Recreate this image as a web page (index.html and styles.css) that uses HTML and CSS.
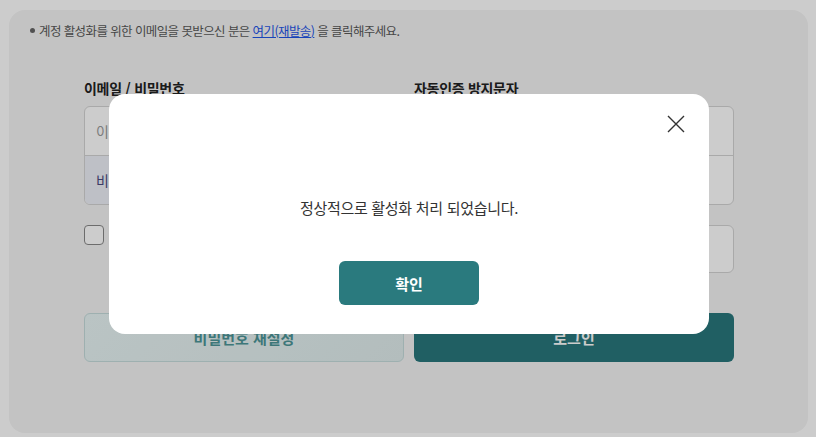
FILE: index.html
```html
<!DOCTYPE html>
<html lang="ko">
<head>
<meta charset="utf-8">
<title>로그인</title>
<link rel="stylesheet" href="styles.css">
</head>
<body>
<div class="card">
  <ul class="notice">
    <li>계정 활성화를 위한 이메일을 못받으신 분은 <a href="#" class="link">여기(재발송)</a> 을 클릭해주세요.</li>
  </ul>
  <div class="form">
    <div class="col">
      <div class="label">이메일 / 비밀번호</div>
      <div class="group">
        <div class="field">이메일</div>
        <div class="field field-pw">비밀번호</div>
      </div>
    </div>
    <div class="col">
      <div class="label">자동인증 방지문자</div>
      <div class="group">
        <div class="field"></div>
        <div class="field"></div>
      </div>
    </div>
    <div class="row2">
      <span class="checkbox"></span>
      <span class="check-label">이메일 저장</span>
    </div>
    <div class="row2">
      <div class="single"></div>
    </div>
    <button class="btn btn-light">비밀번호 재설정</button>
    <button class="btn btn-dark">로그인</button>
  </div>
</div>

<div class="overlay">
  <div class="modal">
    <div class="modal-top">
      <svg class="close" width="18" height="18" viewBox="0 0 18 18"><path d="M1 1 L17 17 M17 1 L1 17" stroke="#333" stroke-width="1.4" fill="none"/></svg>
    </div>
    <p class="message">정상적으로 활성화 처리 되었습니다.</p>
    <button class="ok">확인</button>
  </div>
</div>
</body>
</html>
```
FILE: styles.css
```css
* { box-sizing: border-box; }
html, body { margin: 0; padding: 0; }
body {
  background: #ffffff;
  font-family: "Noto Sans CJK KR", "Noto Sans", sans-serif;
  width: 816px;
  height: 437px;
  overflow: hidden;
}
.card {
  margin: 10px 8px 0 9px;
  height: 423px;
  background: #f4f4f4;
  border-radius: 16px;
  padding-top: 12px;
}
.notice {
  margin: 0;
  padding: 0 0 0 21px;
  list-style: none;
  font-size: 12.5px;
  line-height: 18px;
  color: #595959;
  letter-spacing: -0.6px;
}
.notice li::before {
  content: "";
  display: inline-block;
  width: 5px;
  height: 5px;
  border-radius: 50%;
  background: #666;
  margin-right: 4px;
  vertical-align: 3px;
}
.link { color: #1f55e8; text-decoration: underline; }
.form {
  margin: 38px 74px 0 75px;
  display: grid;
  grid-template-columns: 320px 320px;
  column-gap: 10px;
}
.label {
  font-size: 14px;
  line-height: 20px;
  font-weight: 700;
  color: #222;
  margin-bottom: 8px;
  letter-spacing: -0.3px;
}
.group {
  border: 1px solid #d4d4d4;
  border-radius: 6px;
  background: #fff;
  overflow: hidden;
}
.field {
  height: 48px;
  padding-left: 11px;
  font-size: 14px;
  line-height: 48px;
  color: #9a9a9a;
}
.field + .field { border-top: 1px solid #d4d4d4; height: 49px; }
.field-pw { background: #eef1f8; color: #4b4a80; }
.row2 {
  margin-top: 20px;
  display: flex;
  align-items: flex-start;
  gap: 8px;
}
.checkbox {
  width: 20px;
  height: 20px;
  border: 1.5px solid #888;
  border-radius: 4px;
  background: #fff;
}
.check-label { font-size: 14px; line-height: 20px; color: #333; }
.single {
  width: 100%;
  height: 48px;
  border: 1px solid #d4d4d4;
  border-radius: 6px;
  background: #fff;
}
.btn {
  margin-top: 40px;
  height: 49px;
  border-radius: 6px;
  font-family: inherit;
  font-size: 15px;
  font-weight: 700;
}
.btn-light {
  background: linear-gradient(135deg, #e9f5f5, #e0eded);
  border: 1px solid #c6dddd;
  color: #4d9598;
}
.btn-dark {
  background: #29777c;
  border: none;
  color: #fff;
}
.overlay {
  position: fixed;
  inset: 0;
  background: rgba(0, 0, 0, 0.2);
  display: flex;
  justify-content: center;
  align-items: flex-start;
  padding-top: 94px;
  padding-left: 2px;
}
.modal {
  width: 600px;
  height: 240px;
  background: #fff;
  border-radius: 16px;
  padding: 21px 24px 0;
  display: flex;
  flex-direction: column;
  align-items: center;
}
.modal-top {
  width: 100%;
  display: flex;
  justify-content: flex-end;
}
.close { display: block; }
.message {
  margin: 64px 0 0;
  font-size: 15px;
  line-height: 22px;
  color: #333;
  letter-spacing: -0.3px;
}
.ok {
  margin-top: 42px;
  width: 140px;
  height: 44px;
  border: none;
  border-radius: 6px;
  background: #2a7a7e;
  color: #fff;
  font-family: inherit;
  font-size: 15px;
  font-weight: 700;
}
```
